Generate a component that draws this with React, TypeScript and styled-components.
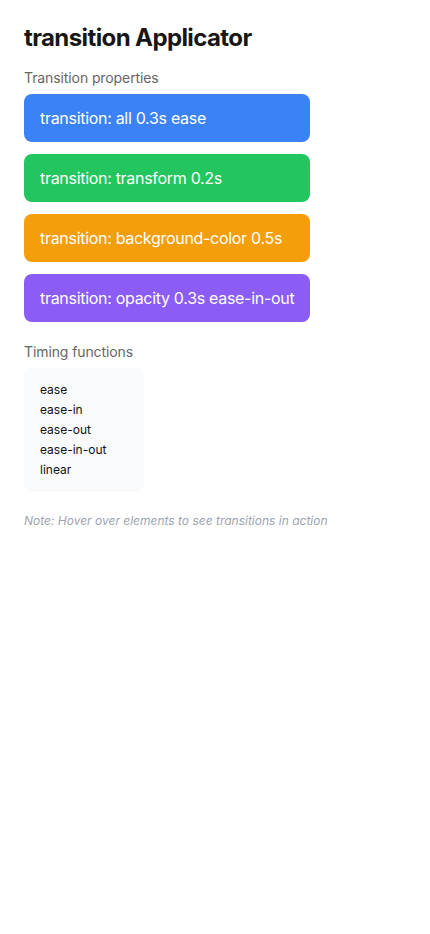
import styled, { createGlobalStyle } from 'styled-components'

const GlobalStyle = createGlobalStyle`
   * {
      box-sizing: border-box;
   }
   body {
      margin: 0;
      background: #ffffff;
      font-family: Inter, 'Noto Sans', sans-serif;
   }
`

const properties = [
   { label: 'transition: all 0.3s ease', color: '#3b82f6' },
   { label: 'transition: transform 0.2s', color: '#22c55e' },
   { label: 'transition: background-color 0.5s', color: '#f59e0b' },
   { label: 'transition: opacity 0.3s ease-in-out', color: '#8b5cf6' },
]

const timings = ['ease', 'ease-in', 'ease-out', 'ease-in-out', 'linear']

const App: React.FC = () => {
   return (
      <>
         <GlobalStyle />
         <Page>
            <Title>transition Applicator</Title>
            <Section>
               <Label>Transition properties</Label>
               <ButtonList>
                  {properties.map((p) => (
                     <TransitionButton key={p.label} $color={p.color}>
                        {p.label}
                     </TransitionButton>
                  ))}
               </ButtonList>
            </Section>
            <Section>
               <Label>Timing functions</Label>
               <TimingBox>
                  {timings.map((t) => (
                     <TimingItem key={t}>{t}</TimingItem>
                  ))}
               </TimingBox>
            </Section>
            <Note>Note: Hover over elements to see transitions in action</Note>
         </Page>
      </>
   )
}

export default App

const Page = styled.div`
   padding: 24px;
   display: flex;
   flex-direction: column;
`

const Title = styled.h1`
   margin: 0 0 16px;
   font-size: 24px;
   line-height: 28px;
   font-weight: 700;
   color: #171717;
   letter-spacing: -0.6px;
`

const Section = styled.div`
   display: flex;
   flex-direction: column;
   gap: 6px;
   margin-bottom: 20px;
`

const Label = styled.div`
   font-size: 14px;
   line-height: 20px;
   color: #666666;
   letter-spacing: -0.1px;
`

const ButtonList = styled.div`
   display: flex;
   flex-direction: column;
   gap: 12px;
`

const TransitionButton = styled.div<{ $color: string }>`
   width: 286px;
   height: 48px;
   padding: 0 16px;
   display: flex;
   align-items: center;
   border-radius: 8px;
   background: ${(p) => p.$color};
   color: #ffffff;
   font-size: 16px;
   letter-spacing: -0.3px;
   white-space: nowrap;
   transition: all 0.3s ease;
`

const TimingBox = styled.div`
   width: 120px;
   padding: 12px 16px;
   border-radius: 8px;
   background: #f9fafb;
`

const TimingItem = styled.div`
   font-size: 12px;
   line-height: 20px;
   color: #111111;
`

const Note = styled.p`
   margin: 0;
   font-size: 12px;
   line-height: 18px;
   font-style: italic;
   color: #9ca3af;
`
